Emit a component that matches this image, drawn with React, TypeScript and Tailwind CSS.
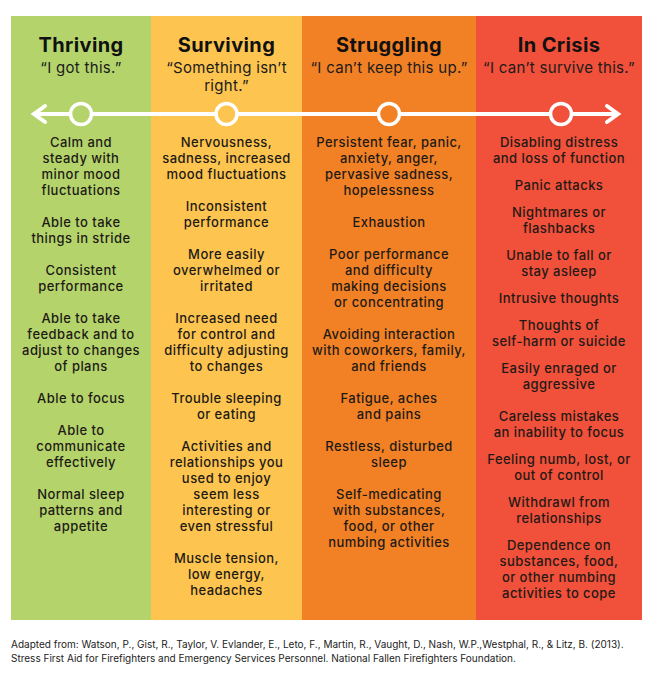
const font = { fontFamily: 'Inter, "Noto Sans", sans-serif' }

type Column = {
  title: string
  quote: string[]
  bg: string
  fill: string
  width: string
  gap: string
  items: string[][]
}

const columns: Column[] = [
  {
    title: 'Thriving',
    quote: ['“I got this.”'],
    bg: 'bg-[#b4d46b]',
    fill: '#b4d46b',
    width: 'w-[140px]',
    gap: 'gap-4',
    items: [
      ['Calm and', 'steady with', 'minor mood', 'fluctuations'],
      ['Able to take', 'things in stride'],
      ['Consistent', 'performance'],
      ['Able to take', 'feedback and to', 'adjust to changes', 'of plans'],
      ['Able to focus'],
      ['Able to', 'communicate', 'effectively'],
      ['Normal sleep', 'patterns and', 'appetite'],
    ],
  },
  {
    title: 'Surviving',
    quote: ['“Something isn’t', 'right.”'],
    bg: 'bg-[#fdc54f]',
    fill: '#fdc54f',
    width: 'w-[151px]',
    gap: 'gap-4',
    items: [
      ['Nervousness,', 'sadness, increased', 'mood fluctuations'],
      ['Inconsistent', 'performance'],
      ['More easily', 'overwhelmed or', 'irritated'],
      ['Increased need', 'for control and', 'difficulty adjusting', 'to changes'],
      ['Trouble sleeping', 'or eating'],
      ['Activities and', 'relationships you', 'used to enjoy', 'seem less', 'interesting or', 'even stressful'],
      ['Muscle tension,', 'low energy,', 'headaches'],
    ],
  },
  {
    title: 'Struggling',
    quote: ['“I can’t keep this up.”'],
    bg: 'bg-[#f28125]',
    fill: '#f28125',
    width: 'w-[174px]',
    gap: 'gap-4',
    items: [
      ['Persistent fear, panic,', 'anxiety, anger,', 'pervasive sadness,', 'hopelessness'],
      ['Exhaustion'],
      ['Poor performance', 'and difficulty', 'making decisions', 'or concentrating'],
      ['Avoiding interaction', 'with coworkers, family,', 'and friends'],
      ['Fatigue, aches', 'and pains'],
      ['Restless, disturbed', 'sleep'],
      ['Self-medicating', 'with substances,', 'food, or other', 'numbing activities'],
    ],
  },
  {
    title: 'In Crisis',
    quote: ['“I can’t survive this.”'],
    bg: 'bg-[#f1503a]',
    fill: '#f1503a',
    width: 'flex-1',
    gap: 'gap-[11px]',
    items: [
      ['Disabling distress', 'and loss of function'],
      ['Panic attacks'],
      ['Nightmares or', 'flashbacks'],
      ['Unable to fall or', 'stay asleep'],
      ['Intrusive thoughts'],
      ['Thoughts of', 'self-harm or suicide'],
      ['Easily enraged or', 'aggressive'],
      ['Careless mistakes', 'an inability to focus'],
      ['Feeling numb, lost, or', 'out of control'],
      ['Withdrawl from', 'relationships'],
      ['Dependence on', 'substances, food,', 'or other numbing', 'activities to cope'],
    ],
  },
]

// ring centres along the line, relative to the chart's left edge
const rings = [70, 215.5, 378, 550]

function Timeline() {
  return (
    <svg className="absolute left-0 top-[83px] pointer-events-none" width="635" height="30" viewBox="0 0 635 30">
      <line x1="23" y1="15" x2="607" y2="15" stroke="white" strokeWidth="4" />
      <polyline points="34,7 23,15 34,23" fill="none" stroke="white" strokeWidth="4" strokeLinecap="round" strokeLinejoin="miter" />
      <polyline points="596,7 607,15 596,23" fill="none" stroke="white" strokeWidth="4" strokeLinecap="round" strokeLinejoin="miter" />
      {rings.map((x, i) => (
        <circle key={x} cx={x} cy="15" r="10.5" fill={columns[i].fill} stroke="white" strokeWidth="3.5" />
      ))}
    </svg>
  )
}

export default function App() {
  return (
    <div className="w-[653px] h-[680px] bg-white pt-4 px-[11px]" style={font}>
      <div className="relative flex h-[604px]">
        {columns.map((col) => (
          <div key={col.title} className={`${col.width} ${col.bg} flex flex-col items-center text-center`}>
            <div className="h-[118px] pt-[17px] flex flex-col items-center">
              <h2 className="text-[20px] leading-6 font-bold text-[#111] tracking-[0.02em]">{col.title}</h2>
              <div className="mt-[2px] text-[15px] leading-[18px] text-[#1b1b1b] tracking-[0.3px]">
                {col.quote.map((q) => (
                  <div key={q} className="whitespace-nowrap">{q}</div>
                ))}
              </div>
            </div>
            <div className={`flex flex-col ${col.gap}`}>
              {col.items.map((item) => (
                <div
                  key={item[0]}
                  className={`text-[13px] leading-4 font-medium text-[#1e1a16] tracking-[0.45px] ${item[0] === 'Careless mistakes' ? 'mt-[5px]' : ''}`}
                >
                  {item.map((line) => (
                    <div key={line} className="whitespace-nowrap">{line}</div>
                  ))}
                </div>
              ))}
            </div>
          </div>
        ))}
        <Timeline />
      </div>

      <div className="mt-[17px] text-[10px] leading-[14px] text-[#222] whitespace-nowrap">
        <p>
          Adapted from: Watson, P., Gist, R., Taylor, V. Evlander, E., Leto, F., Martin, R., Vaught, D., Nash, W.P.,Westphal, R., &amp; Litz, B. (2013).
        </p>
        <p>Stress First Aid for Firefighters and Emergency Services Personnel. National Fallen Firefighters Foundation.</p>
      </div>
    </div>
  )
}
